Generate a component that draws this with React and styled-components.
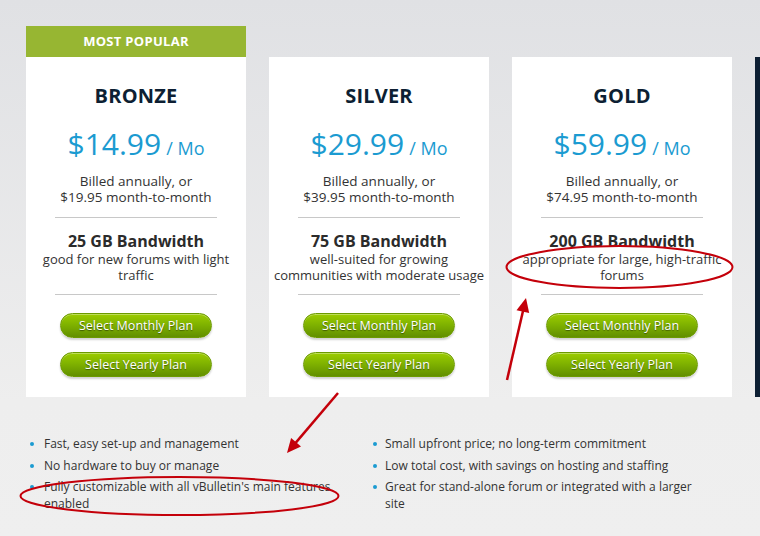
import React from "react";
import styled, { createGlobalStyle } from "styled-components";

const GlobalStyle = createGlobalStyle`
  html, body {
    margin: 0;
    padding: 0;
  }
  body {
    width: 760px;
    height: 536px;
    overflow: hidden;
    font-family: "Open Sans", "Noto Sans", sans-serif;
    color: #333;
    background: linear-gradient(to bottom, #e0e1e4 0%, #eeeeee 75%, #efefef 100%);
  }
`;

const Page = styled.div`
  position: relative;
  width: 760px;
  height: 536px;
  overflow: hidden;
  padding: 26px 0 0 26px;
  box-sizing: border-box;
`;

const CardsRow = styled.div`
  display: flex;
  gap: 23px;
  align-items: flex-end;
  width: 1000px;
`;

const CardWrap = styled.div`
  width: 220px;
  flex-shrink: 0;
  display: flex;
  flex-direction: column;
`;

const Ribbon = styled.div`
  height: 31px;
  line-height: 31px;
  background: #97b632;
  color: #fff;
  font-weight: 700;
  font-size: 13px;
  text-align: center;
  letter-spacing: 0.3px;
`;

const Card = styled.div`
  height: 340px;
  background: ${(p) => (p.dark ? "#0d1f33" : "#fff")};
  display: flex;
  flex-direction: column;
  align-items: center;
  padding: 27px 4px 0;
  box-sizing: border-box;
`;

const PlanName = styled.h2`
  margin: 0;
  font-size: 20px;
  line-height: 24px;
  font-weight: 700;
  color: #0d1f33;
  letter-spacing: 0.2px;
`;

const Price = styled.div`
  margin-top: 18px;
  height: 36px;
  line-height: 36px;
  color: #1b9bd1;
  white-space: nowrap;
  font-weight: 500;
`;

const Amount = styled.span`
  font-size: 30px;
  line-height: 36px;
`;

const Per = styled.span`
  font-size: 18px;
  line-height: 18px;
  margin-left: 5px;
`;

const Billed = styled.p`
  margin: 11px 0 0;
  font-size: 13.5px;
  line-height: 16px;
  text-align: center;
`;

const Divider = styled.hr`
  width: 162px;
  border: 0;
  border-top: 1px solid #c8c8c8;
  margin: ${(p) => p.m || "12px 0 0"};
`;

const Bandwidth = styled.h3`
  margin: 14px 0 0;
  font-size: 16px;
  line-height: 18px;
  font-weight: 700;
  color: #2b2b2b;
`;

const Desc = styled.p`
  margin: 1px 0 0;
  font-size: 13px;
  line-height: 16px;
  text-align: center;
  height: 32px;
`;

const Button = styled.button`
  width: 152px;
  height: 25px;
  margin-top: ${(p) => p.mt || "14px"};
  border-radius: 13px;
  border: 1px solid #6c9a00;
  background: linear-gradient(to bottom, #9ccc00 0%, #80b300 45%, #628f00 100%);
  box-shadow: 0 2px 2px rgba(0, 0, 0, 0.18), inset 0 1px 0 rgba(255, 255, 255, 0.35);
  color: #fff;
  font-family: inherit;
  font-size: 12.5px;
  text-shadow: 0 1px 1px rgba(0, 0, 0, 0.45);
  padding: 0;
  cursor: pointer;
`;

const Features = styled.div`
  display: grid;
  grid-template-columns: 343px 360px;
  margin-top: 38px;
  margin-left: 4px;
`;

const List = styled.ul`
  list-style: none;
  margin: 0;
  padding: 0;
  width: ${(p) => p.w || "300px"};
`;

const Item = styled.li`
  position: relative;
  padding-left: ${(p) => p.pl || "14px"};
  font-size: 12px;
  line-height: 17px;
  margin-bottom: 4.5px;

  &::before {
    content: "";
    position: absolute;
    left: 0;
    top: 7px;
    width: 4px;
    height: 4px;
    border-radius: 50%;
    background: #1b9bd1;
  }
`;

const Overlay = styled.svg`
  position: absolute;
  left: 0;
  top: 0;
  pointer-events: none;
`;

const plans = [
  {
    name: "BRONZE",
    price: "$14.99",
    monthly: "$19.95",
    bw: "25 GB Bandwidth",
    desc: "good for new forums with light traffic",
    popular: true,
  },
  {
    name: "SILVER",
    price: "$29.99",
    monthly: "$39.95",
    bw: "75 GB Bandwidth",
    desc: "well-suited for growing communities with moderate usage",
  },
  {
    name: "GOLD",
    price: "$59.99",
    monthly: "$74.95",
    bw: "200 GB Bandwidth",
    desc: "appropriate for large, high-traffic forums",
  },
];

const left = [
  "Fast, easy set-up and management",
  "No hardware to buy or manage",
  "Fully customizable with all vBulletin's main features enabled",
];

const right = [
  "Small upfront price; no long-term commitment",
  "Low total cost, with savings on hosting and staffing",
  "Great for stand-alone forum or integrated with a larger site",
];

const Arrow = ({ x1, y1, x2, y2 }) => {
  const dx = x2 - x1;
  const dy = y2 - y1;
  const len = Math.sqrt(dx * dx + dy * dy);
  const ux = dx / len;
  const uy = dy / len;
  const bx = x2 - ux * 14;
  const by = y2 - uy * 14;
  const px = -uy * 6.5;
  const py = ux * 6.5;
  return (
    <g>
      <line x1={x1} y1={y1} x2={bx + ux * 2} y2={by + uy * 2} stroke="#c4000a" strokeWidth="2.5" />
      <polygon
        points={`${x2},${y2} ${bx + px},${by + py} ${bx - px},${by - py}`}
        fill="#c4000a"
      />
    </g>
  );
};

const PlanCard = ({ plan }) => (
  <CardWrap>
    {plan.popular && <Ribbon>MOST POPULAR</Ribbon>}
    <Card>
      <PlanName>{plan.name}</PlanName>
      <Price>
        <Amount>{plan.price}</Amount>
        <Per>/ Mo</Per>
      </Price>
      <Billed>
        Billed annually, or
        <br />
        {plan.monthly} month-to-month
      </Billed>
      <Divider />
      <Bandwidth>{plan.bw}</Bandwidth>
      <Desc>{plan.desc}</Desc>
      <Divider m="11px 0 0" />
      <Button mt="18px">Select Monthly Plan</Button>
      <Button>Select Yearly Plan</Button>
    </Card>
  </CardWrap>
);

export default function App() {
  return (
    <>
      <GlobalStyle />
      <Page>
        <CardsRow>
          {plans.map((p) => (
            <PlanCard key={p.name} plan={p} />
          ))}
          <CardWrap>
            <Card dark />
          </CardWrap>
        </CardsRow>
        <Features>
          <List w="320px">
            {left.map((t) => (
              <Item key={t}>{t}</Item>
            ))}
          </List>
          <List w="330px">
            {right.map((t) => (
              <Item key={t} pl="12px">
                {t}
              </Item>
            ))}
          </List>
        </Features>
        <Overlay width="760" height="536" viewBox="0 0 760 536">
          <ellipse cx="619.5" cy="267" rx="113" ry="21" fill="none" stroke="#c4000a" strokeWidth="2" />
          <ellipse cx="179.5" cy="496" rx="159" ry="19" fill="none" stroke="#c4000a" strokeWidth="2" />
          <Arrow x1={507} y1={380} x2={526} y2={298} />
          <Arrow x1={338} y1={393} x2={287} y2={453} />
        </Overlay>
      </Page>
    </>
  );
}
